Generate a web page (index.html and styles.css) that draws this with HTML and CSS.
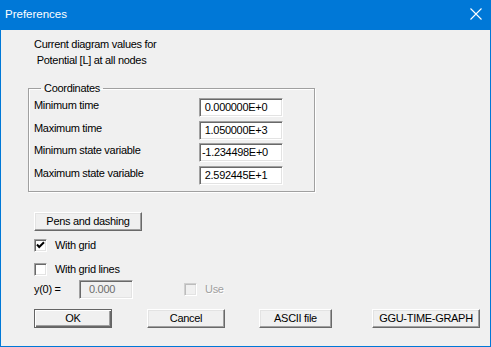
FILE: index.html
```html
<!DOCTYPE html>
<html>
<head>
    <title>Preferences</title>
    <link rel="stylesheet" href="styles.css">
</head>
<body>
    <div class="window">
        <div class="titlebar">
            <span class="title">Preferences</span>
            <svg class="close" width="12" height="12" viewBox="0 0 12 12">
                <path d="M0.5 0.5 L11.5 11.5 M11.5 0.5 L0.5 11.5" stroke="#fff" stroke-width="1.1" fill="none"/>
            </svg>
        </div>

        <div class="content">
            <p class="info">Current diagram values for<br>&nbsp;Potential [L] at all nodes</p>

            <fieldset class="group">
                <legend>Coordinates</legend>
                <div class="grid">
                    <label>Minimum time</label>
                    <div class="field"> 0.000000E+0</div>

                    <label>Maximum time</label>
                    <div class="field"> 1.050000E+3</div>

                    <label>Minimum state variable</label>
                    <div class="field">-1.234498E+0</div>

                    <label>Maximum state variable</label>
                    <div class="field"> 2.592445E+1</div>
                </div>
            </fieldset>

            <button class="btn pens">Pens and dashing</button>

            <label class="check first">
                <span class="box">
                    <svg width="9" height="9" viewBox="0 0 9 9">
                        <path d="M1 3.5 L3.2 6 L8 1.2" stroke="#000" stroke-width="2" fill="none"/>
                    </svg>
                </span>
                With grid
            </label>
            <label class="check second"><span class="box"></span>With grid lines</label>

            <div class="yrow">
                <span class="ylabel">y(0) =</span>
                <div class="field disabled">0.000</div>
                <label class="check off"><span class="box"></span>Use</label>
            </div>

            <div class="buttons">
                <button class="btn default ok">OK</button>
                <button class="btn cancel">Cancel</button>
                <button class="btn ascii">ASCII file</button>
                <button class="btn ggu">GGU-TIME-GRAPH</button>
            </div>
        </div>
    </div>
</body>
</html>
```

FILE: styles.css
```css
body {
    margin: 0;
    font-family: "Liberation Sans", Arial, sans-serif;
    font-size: 11px;
    letter-spacing: -0.3px;
    color: #000;
}

.window {
    width: 491px;
    height: 347px;
    box-sizing: border-box;
    border: 1px solid #0078d7;
    border-top: none;
    background-color: #f0f0f0;
}

.titlebar {
    height: 30px;
    margin: 0 -1px;
    padding: 0 9px 0 5px;
    background-color: #0078d7;
    display: flex;
    align-items: center;
    justify-content: space-between;
}

.title {
    color: #fff;
    font-size: 11.5px;
    letter-spacing: 0;
    margin-top: -2px;
}

.close {
    margin-top: -3px;
}

.content {
    padding: 6px 0 0 33px;
}

.info {
    margin: 0;
    line-height: 16px;
}

/* Coordinates group box */
.group {
    margin: 13px 0 0 -6px;
    padding: 3px 0 6px 5px;
    width: 287px;
    box-sizing: border-box;
    border: 1px solid #a0a0a0;
    box-shadow: 1px 1px 0 #fff, inset 1px 1px 0 #fff;
}

.group legend {
    margin-left: 7px;
    padding: 0 3px;
    line-height: 14px;
}

.grid {
    display: grid;
    grid-template-columns: 165px 84px;
    row-gap: 3.67px;
}

.grid label {
    line-height: 14px;
    align-self: start;
}

.field {
    height: 19px;
    box-sizing: border-box;
    padding: 0 2px;
    line-height: 17px;
    white-space: pre;
    background-color: #fff;
    border: 1px solid;
    border-color: #a0a0a0 #fff #fff #a0a0a0;
    box-shadow: inset 1px 1px 0 #696969, inset -1px -1px 0 #e3e3e3;
}

.field.disabled {
    width: 54px;
    padding-left: 9px;
    background-color: #f0f0f0;
    color: #6d6d6d;
}

/* Buttons */
.btn {
    display: block;
    height: 19px;
    padding: 0;
    box-sizing: border-box;
    font-family: inherit;
    font-size: 11px;
    letter-spacing: -0.3px;
    color: #000;
    background-color: #f0f0f0;
    border: 1px solid;
    border-color: #fff #696969 #696969 #fff;
    box-shadow: inset -1px -1px 0 #a0a0a0, inset 1px 1px 0 #e3e3e3;
}

.btn.default {
    border-color: #646464;
    box-shadow: inset 1px 1px 0 #fff, inset -1px -1px 0 #696969, inset -2px -2px 0 #a0a0a0;
}

.pens {
    width: 108px;
    margin-top: 20px;
}

/* Checkboxes */
.check {
    display: flex;
    align-items: center;
    height: 13px;
    line-height: 13px;
}

.check.first {
    margin-top: 8px;
}

.check.second {
    margin-top: 11px;
}

.box {
    width: 13px;
    height: 13px;
    box-sizing: border-box;
    margin-right: 8px;
    padding: 1px;
    background-color: #fff;
    border: 1px solid;
    border-color: #a0a0a0 #fff #fff #a0a0a0;
    box-shadow: inset 1px 1px 0 #696969, inset -1px -1px 0 #e3e3e3;
}

.box svg {
    display: block;
}

.check.off {
    margin-left: 51px;
    color: #a0a0a0;
    text-shadow: 1px 1px 0 #fff;
}

.check.off .box {
    background-color: #f0f0f0;
    border-color: #d0d0d0 #fff #fff #d0d0d0;
    box-shadow: inset 1px 1px 0 #bcbcbc, inset -1px -1px 0 #e3e3e3;
}

.yrow {
    display: flex;
    align-items: center;
    margin-top: 4px;
    height: 19px;
}

.ylabel {
    width: 45px;
}

.buttons {
    display: flex;
    margin-top: 10px;
}

.ok {
    width: 78px;
}

.cancel {
    width: 78px;
    margin-left: 35px;
}

.ascii {
    width: 73px;
    margin-left: 34px;
}

.ggu {
    width: 108px;
    margin-left: 40px;
}
```
